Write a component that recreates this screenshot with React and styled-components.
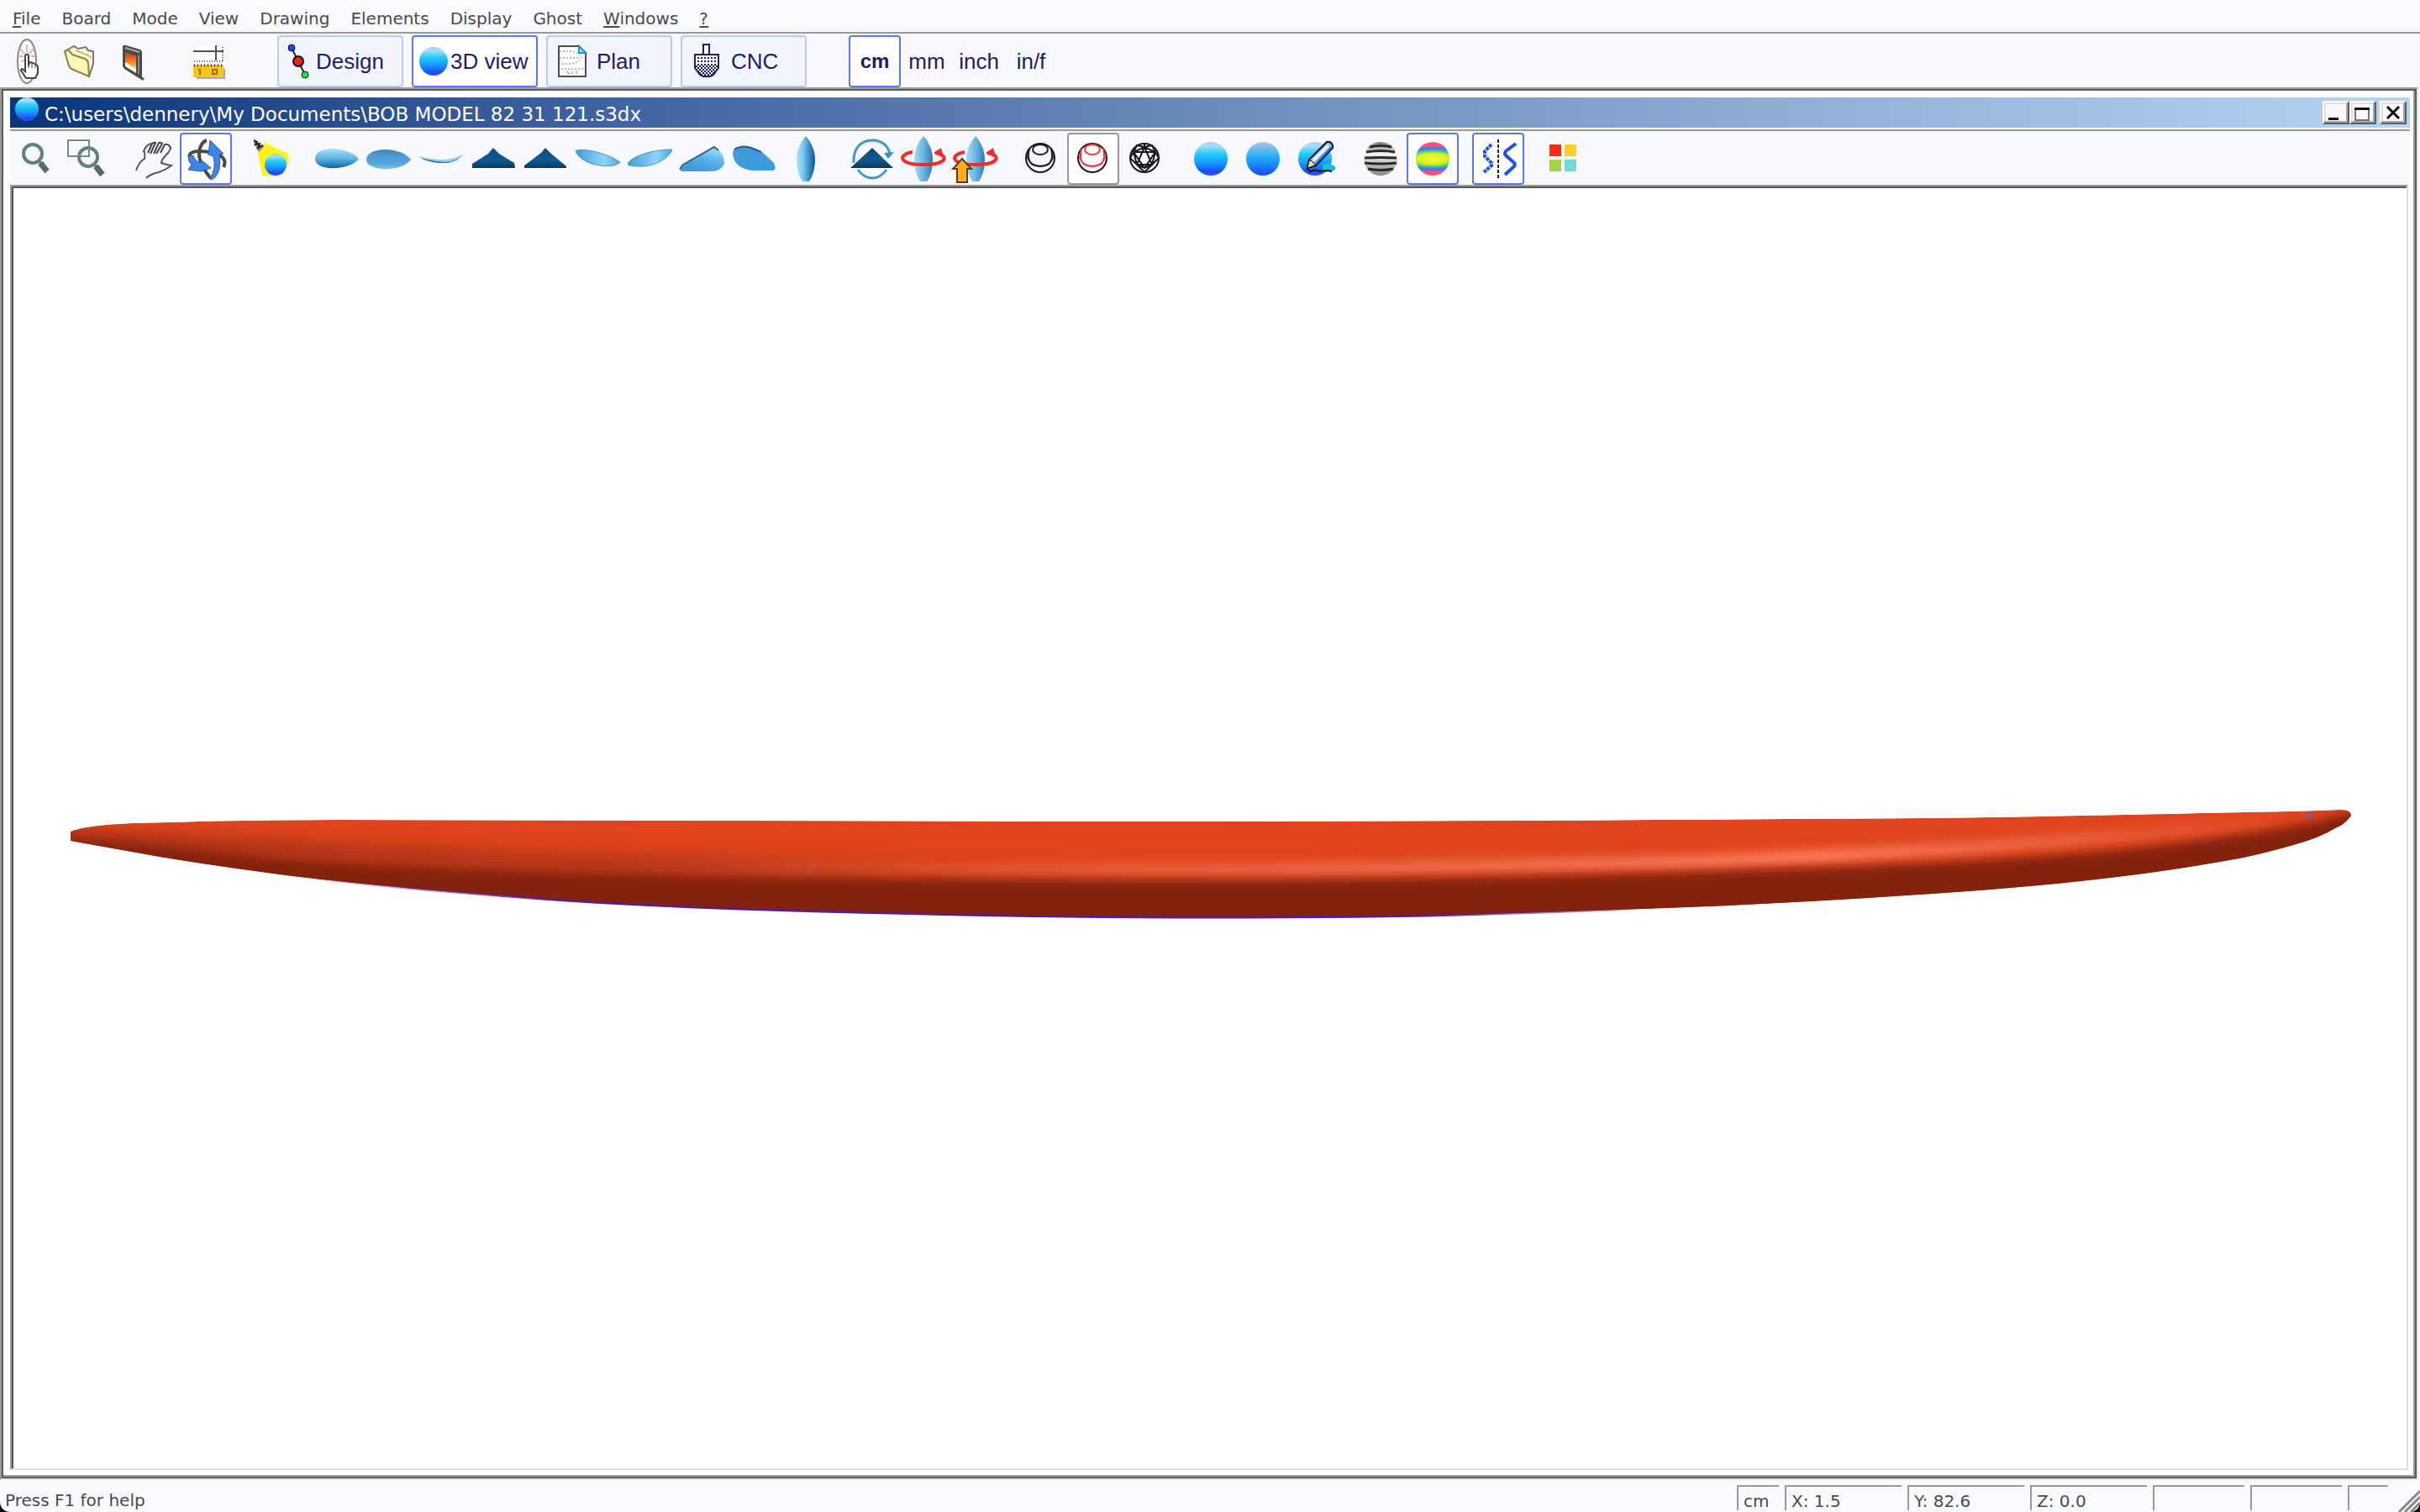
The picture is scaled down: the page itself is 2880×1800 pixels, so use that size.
import { useState } from 'react';
import styled, { createGlobalStyle } from 'styled-components';

const GlobalStyle = createGlobalStyle`
  *,
  *::before,
  *::after {
    box-sizing: border-box;
  }

  body {
    margin: 0;
    background-color: #000;
    color: #4a4a4a;
    font-family: 'DejaVu Sans', sans-serif;
    font-size: 20px;
  }

  button {
    margin: 0;
    font-family: inherit;
    color: inherit;
  }
`;

const Window = styled.div`
  display: flex;
  flex-direction: column;
  min-height: 100vh;
  background-color: #f9fbff;
  border-radius: 0 0 12px 12px;
  overflow: hidden;
`;

const MenuBar = styled.nav`
  display: flex;
  gap: 25px;
  height: 40px;
  padding: 6px 15px 0;
  border-bottom: 2px solid #999;
`;

const MenuItem = styled.button`
  padding: 0;
  border: none;
  background: none;
  font-size: 20px;

  u {
    text-decoration-thickness: 2px;
    text-underline-offset: 2px;
  }
`;

const Toolbar = styled.div`
  display: flex;
  align-items: flex-end;
  gap: ${(props) => props.$gap}px;
  height: 64px;
  padding-left: ${(props) => props.$indent || 0}px;
  background-color: #f7f9ff;
`;

const Group = styled.div`
  display: flex;
  gap: ${(props) => props.$gap || 0}px;
  margin-left: ${(props) => props.$space || 0}px;
`;

const ringColors = { blue: '#5b78f0', grey: '#999' };

const ToolButton = styled.button`
  display: grid;
  place-items: center;
  width: 62px;
  height: 62px;
  padding: 0;
  border: 2px solid ${(props) => ringColors[props.$ring] || 'transparent'};
  border-radius: 4px;
  background-color: ${(props) => (props.$ring ? '#fff' : 'transparent')};
`;

const ModeButton = styled.button`
  display: flex;
  align-items: center;
  gap: 2px;
  width: 150px;
  height: 62px;
  padding: 0 0 0 6px;
  border: 2px solid ${(props) => (props.$active ? '#5b78f0' : '#bccaf8')};
  border-radius: 4px;
  background-color: ${(props) => (props.$active ? '#fff' : '#f2f5fb')};
  color: #1c1c6c;
  font-family: 'Liberation Sans', sans-serif;
  font-size: 26px;
`;

const UnitButton = styled(ToolButton)`
  color: #1c1c6c;
  font-family: 'Liberation Sans', sans-serif;
  font-size: ${(props) => (props.$ring ? 24 : 26)}px;
  font-weight: ${(props) => (props.$ring ? 700 : 400)};
`;

const Frame = styled.main`
  display: flex;
  flex: 1;
  margin-right: 2px;
  border: 2px solid;
  border-color: #999 #e6e6e0 #e6e6e0 #999;
`;

const FrameInner = styled.div`
  display: flex;
  flex: 1;
  flex-direction: column;
  padding: 8px 6px 8px 8px;
  border: 2px solid #5c5c5c;
  background-color: #fff;
  box-shadow: inset -2px -2px #999;
`;

const TitleBar = styled.header`
  display: flex;
  align-items: center;
  height: 36px;
  padding: 0 4px 0 6px;
  background: linear-gradient(90deg, #0b3479, #3d62a0 24%, #6585b6 46%, #b5d5f3);
`;

const Title = styled.h1`
  flex: 1;
  margin: 0 0 0 5px;
  padding-top: 3px;
  color: #fff;
  font-size: 23px;
  font-weight: 400;
`;

const TitleIcon = styled.svg`
  align-self: flex-start;
`;

const WindowButton = styled.button`
  width: 32px;
  height: 28px;
  margin-left: ${(props) => props.$space || 0}px;
  padding: 0;
  border: 2px solid;
  border-color: #fff #5c5c5c #5c5c5c #fff;
  background-color: #f8faff;
  box-shadow: inset -2px -2px #a8a8a8, inset 2px 2px #e2e0da;

  svg {
    display: block;
  }
`;

const ViewTools = styled.div`
  margin-top: 2px;
  border-top: 2px solid #999;
`;

const Canvas = styled.section`
  display: flex;
  flex: 1;
  margin-right: 2px;
  border: 2px solid;
  border-color: #999 #dcdcdc #dcdcdc #999;
`;

const CanvasInner = styled.div`
  display: flex;
  flex: 1;
  border: solid #555;
  border-width: 2px 0 0 2px;
  background-color: #fff;
`;

const Drawing = styled.svg`
  display: block;
  flex: 1;
  width: 100%;
  min-width: 0;
`;

const StatusBar = styled.footer`
  display: flex;
  align-items: center;
  gap: 7px;
  height: 38px;
  padding-top: 4px;
`;

const Hint = styled.span`
  flex: 1;
  padding: 6px 0 0 6px;
`;

const Cell = styled.span`
  display: flex;
  align-items: center;
  width: ${(props) => props.$width}px;
  height: 30px;
  padding: 5px 0 0 6px;
  border: solid #999;
  border-width: 2px 0 0 2px;
`;

const Icon = ({ width = 58, children }) => (
  <svg width={width} height="58" viewBox={`0 0 ${width} 58`} fill="none" aria-hidden="true">
    {children}
  </svg>
);

const Ball = ({ cx = 29, cy = 29, r = 20, fill = 'ball' }) => (
  <circle cx={cx} cy={cy} r={r} fill={`url(#${fill})`} />
);

/* Gradients shared by all the icons */
const Shades = () => (
  <defs>
    <linearGradient id="ball" x1="0" y1="0" x2="0" y2="1">
      <stop offset="0" stopColor="#b6c3f2" />
      <stop offset="0.12" stopColor="#a4e0fa" />
      <stop offset="0.35" stopColor="#22cdfb" />
      <stop offset="0.62" stopColor="#189afe" />
      <stop offset="0.88" stopColor="#1450fa" />
      <stop offset="1" stopColor="#3a4df0" />
    </linearGradient>
    <linearGradient id="softBall" x1="0" y1="0" x2="0" y2="1">
      <stop offset="0" stopColor="#c9b9e6" />
      <stop offset="0.25" stopColor="#53c0f2" />
      <stop offset="0.55" stopColor="#16a3fb" />
      <stop offset="1" stopColor="#1e46f5" />
    </linearGradient>
    <linearGradient id="deck" x1="0" y1="0" x2="0" y2="1">
      <stop offset="0" stopColor="#a4e0fb" />
      <stop offset="0.5" stopColor="#62b6e6" />
      <stop offset="1" stopColor="#0d619e" />
    </linearGradient>
    <linearGradient id="bottom" x1="0" y1="0" x2="0" y2="1">
      <stop offset="0" stopColor="#3f82ae" />
      <stop offset="0.3" stopColor="#4a9ad4" />
      <stop offset="0.75" stopColor="#57a8de" />
      <stop offset="1" stopColor="#86c2e6" />
    </linearGradient>
    <linearGradient id="nose" x1="0" y1="0" x2="0" y2="1">
      <stop offset="0" stopColor="#0c4a7d" />
      <stop offset="0.6" stopColor="#105a90" />
      <stop offset="1" stopColor="#063862" />
    </linearGradient>
    <linearGradient id="leaf" x1="0" y1="0" x2="1" y2="0">
      <stop offset="0" stopColor="#3f9bdc" />
      <stop offset="0.65" stopColor="#8ed6fa" />
      <stop offset="1" stopColor="#4ba6df" />
    </linearGradient>
    <linearGradient id="wedge" x1="1" y1="0" x2="0.5" y2="1">
      <stop offset="0" stopColor="#a8eaff" />
      <stop offset="0.6" stopColor="#55aee8" />
      <stop offset="1" stopColor="#3f9bdc" />
    </linearGradient>
    <linearGradient id="upright" x1="0" y1="0" x2="1" y2="0">
      <stop offset="0" stopColor="#a8e6fd" />
      <stop offset="0.35" stopColor="#7cc8f0" />
      <stop offset="0.7" stopColor="#3a87c4" />
      <stop offset="1" stopColor="#0d568f" />
    </linearGradient>
    <linearGradient id="uprightPale" x1="0" y1="0" x2="1" y2="0">
      <stop offset="0" stopColor="#a2dcf7" />
      <stop offset="0.5" stopColor="#6cb6e4" />
      <stop offset="1" stopColor="#3079b4" />
    </linearGradient>
    <linearGradient id="zebra" x1="0" y1="0" x2="0" y2="1">
      <stop offset="0" stopColor="#777" />
      <stop offset="0.35" stopColor="#f4f4f4" />
      <stop offset="1" stopColor="#888" />
    </linearGradient>
    <radialGradient id="rainbow" gradientTransform="translate(-1 0) scale(3 1)">
      <stop offset="0" stopColor="#f6f84a" />
      <stop offset="0.3" stopColor="#d8f21c" />
      <stop offset="0.42" stopColor="#7be33c" />
      <stop offset="0.52" stopColor="#22a8e8" />
      <stop offset="0.64" stopColor="#5a6cf4" />
      <stop offset="0.78" stopColor="#f4507c" />
      <stop offset="1" stopColor="#ff5a5a" />
    </radialGradient>
    <linearGradient id="sunset" x1="0" y1="0" x2="0" y2="1">
      <stop offset="0" stopColor="#d9300c" />
      <stop offset="0.5" stopColor="#f68b1f" />
      <stop offset="1" stopColor="#fff0c0" />
    </linearGradient>
  </defs>
);

const NewIcon = () => (
  <Icon>
    <ellipse cx="28" cy="29" rx="11" ry="26" fill="#fff" stroke="#888" strokeWidth="2" />
    <path d="M28 9v9M20 14l5 6M36 14l-5 6M18 23h6M38 23h-5M21 30l4-3" stroke="#f7a8a8" strokeWidth="2" />
    <path
      d="M26 22q2-3 4 0v11l2-3 3 1 3 1 3 3v8l-3 6H27l-6-9q0-4 4 0l1 1z"
      fill="#fff"
      stroke="#444"
      strokeWidth="2"
    />
    <path d="M30 32v5M34 32v5M38 33v4" stroke="#444" strokeWidth="1" />
  </Icon>
);

const OpenIcon = () => (
  <Icon>
    <path d="M13 16l9-5 5 3 9-2 3 4 6 1v15l-5 15z" fill="#fbf6cf" stroke="#777" strokeWidth="2" />
    <path d="M11 17l4-2 5 6 15 5q4 2 4 6l1 15-21-9q-3-2-4-7z" fill="#fdf8b4" stroke="#8a8348" strokeWidth="2" />
    <path d="M24 16l15 6 4 3" stroke="#8a8348" strokeWidth="1" />
  </Icon>
);

const SaveIcon = () => (
  <Icon>
    <path d="M18 11q1-2 4-1l17 5q2 1 2 4v29l3 1-2 3-22-14q-2-2-2-4z" fill="#4b4b4b" />
    <path d="M21 18l13 5v19l-13-9z" fill="url(#sunset)" />
    <path d="M21 13l17 5" stroke="#aaa" strokeWidth="2" />
    <path d="M37 22v22" stroke="#858585" strokeWidth="2" />
    <path d="M21 30l13 8v5l-13-8z" fill="#fffbe8" />
  </Icon>
);

const MeasureIcon = () => (
  <Icon>
    <path d="M14 12h32v20H14z" fill="#fff" />
    <path d="M10 17h36M37 10v18" stroke="#555" strokeWidth="2" />
    <path d="M45 12v18M11 29h34" stroke="#666" strokeWidth="2" strokeDasharray="1 2" />
    <path d="M14 38h34v12H14z" fill="#aaa" />
    <path d="M10 33h36v15H10z" fill="#f5c421" />
    <path d="M11 34h34" stroke="#222" strokeWidth="3" strokeDasharray="1 3" />
    <path d="M18 38v7M16 39h2M33 39h5v5h-5z" stroke="#9c7410" strokeWidth="2" />
  </Icon>
);

const DesignIcon = () => (
  <Icon width={36}>
    <path d="M9 13l8 16 8 16" stroke="#222" strokeWidth="2" />
    <circle cx="9" cy="13" r="4" fill="#2344e8" stroke="#111" />
    <circle cx="17" cy="29" r="6" fill="#f21d1d" stroke="#111" strokeWidth="2" />
    <circle cx="25" cy="45" r="4" fill="#12e838" stroke="#111" />
  </Icon>
);

const ViewIcon = () => (
  <Icon width={36}>
    <Ball cx={18} r={17} />
  </Icon>
);

const PlanIcon = () => (
  <Icon width={50}>
    <path d="M7 11h24l8 8v28H7z" fill="#fff" stroke="#4c4c5c" strokeWidth="2" />
    <path d="M31 11v8h8z" fill="#c9f1f8" stroke="#129fc0" strokeWidth="2" />
    <path d="M8 17h14q10 2 12 8-2 5-12 7H8M8 25h24M10 38h26" stroke="#777" strokeDasharray="2 2" />
    <path d="M16 41l4 3M24 41l-3 3M28 40v4" stroke="#888" />
  </Icon>
);

const CncIcon = () => (
  <Icon width={50}>
    <defs>
      <pattern id="knurl" width="4" height="4" patternUnits="userSpaceOnUse">
        <path d="M0 0h2v2H0z" fill="#1c1c6c" />
      </pattern>
      <pattern id="knurlDense" width="4" height="4" patternUnits="userSpaceOnUse">
        <path d="M0 0h2v2H0zM2 2h2v2H2z" fill="#1c1c6c" />
      </pattern>
    </defs>
    <path d="M19 21V9h7v12" fill="#fff" stroke="#1c1c6c" strokeWidth="2" />
    <path d="M9 21h28v16l-6 8-4 2h-8l-4-2-6-8z" fill="#fff" />
    <path d="M9 21h28v13H9z" fill="url(#knurl)" />
    <path d="M9 34h28v3l-6 8-4 2h-8l-4-2-6-8z" fill="url(#knurlDense)" />
    <path d="M9 21h28v16l-6 8-4 2h-8l-4-2-6-8z" stroke="#1c1c6c" strokeWidth="2" />
  </Icon>
);

const Lens = ({ x, y }) => (
  <>
    <circle cx={x} cy={y} r="11" fill="#f7f9ff" stroke="#637f82" strokeWidth="4" />
    <path d={`M${x + 7} ${y + 8}l3 4`} stroke="#637f82" strokeWidth="3" />
    <path d={`M${x + 9} ${y + 11}l8 10`} stroke="#56696d" strokeWidth="7" />
  </>
);

const ZoomIcon = () => (
  <Icon>
    <Lens x={25} y={23} />
  </Icon>
);

const ZoomBoxIcon = () => (
  <Icon>
    <path d="M5 7h25v19H5z" stroke="#78898c" strokeWidth="2" />
    <Lens x={29} y={27} />
    <path d="M18 26h12V16" stroke="#78898c" strokeWidth="2" />
  </Icon>
);

const PanIcon = () => (
  <Icon>
    <path
      d="M8 43q3-10 10-14 1-8-1-9 3-8 9-9M20 52q5-5 15-7 10-4 15-8-7-1-12-3 0-4 8-12 3-4 3-6"
      stroke="#555"
      strokeWidth="2"
    />
    <path
      d="M22 22l5-11q2-2 4-1l-6 13M29 23l6-13q3-1 4 1l-7 12M37 22l5-10q3-1 5 1 2 2 2 4"
      stroke="#444"
      strokeWidth="2"
    />
  </Icon>
);

const OrbitIcon = () => (
  <Icon>
    <path d="M30 7q-7 2-9 14-1 13 12 29l4 3" stroke="#4a4a4a" strokeWidth="4" />
    <path d="M9 26q1-6 12-6 16 0 26 6 7 5 3 13" stroke="#4a4a4a" strokeWidth="4" />
    <path d="M34 7l16 16-5 1q3 20-6 28l-6 1q9-11 5-27l-6-2z" fill="#3b86e6" stroke="#2a5ea8" />
    <path d="M8 26q0 7 4 10l-4 6 15 2 12-4-12-10v4q-8-3-9-9z" fill="#3b86e6" stroke="#2a5ea8" />
  </Icon>
);

const LightIcon = () => (
  <Icon>
    <path d="M12 17L21 10 49 23v13L34 50l-16-1z" fill="#fdf21a" />
    <path d="M8 7l12 8-6 6-6-11z" fill="#888" />
    <path d="M8 7l4 2-2 3 5-1-2 5 6-3" stroke="#222" strokeWidth="2" />
    <Ball cx={34} cy={36} r={13} />
  </Icon>
);

const UprightBoard = ({ fill = 'upright' }) => (
  <path d="M29 2c7 8 11 18 11 28 0 11-3 20-7 26h-8c-4-6-7-15-7-26 0-10 4-20 11-28z" fill={`url(#${fill})`} />
);

const SpinRing = () => (
  <>
    <path d="M16 21C-2 24-1 36 29 36s30-12 14-14" stroke="#f62a2a" strokeWidth="4" />
    <path d="M41 22l9-6 3 12z" fill="#f62a2a" />
  </>
);

const boardShapes = {
  Deck: <path d="M3 29c0-17 39-15 52 0-10 14-52 16-52 0z" fill="url(#deck)" />,
  Bottom: <path d="M2 30c0-15 40-17 53 0-12 16-53 14-53 0z" fill="url(#bottom)" />,
  Rocker: (
    <>
      <path d="M2 26q27 7 43 2 6-2 11-5-5 7-12 9-20 6-42-6z" fill="#8fcdf2" />
      <path d="M3 27q28 10 44 3l5-3q-8 8-25 7-15-1-24-7z" fill="#2f6a94" />
    </>
  ),
  Nose: <path d="M4 35l19-12 6-7 7 7 18 11 1 6H4z" fill="url(#nose)" />,
  Tail: <path d="M4 37l20-15 5-6 7 7 18 15v2H4z" fill="url(#nose)" />,
  'Left perspective': (
    <path d="M3 20c6-5 37 2 53 13-7 9-46 5-53-13z" fill="url(#leaf)" stroke="#4f93bc" />
  ),
  'Right perspective': (
    <path d="M3 35c3-8 28-17 53-17-5 13-25 21-40 20-8 0-13-1-13-3z" fill="url(#leaf)" stroke="#4f93bc" />
  ),
  'Front quarter': (
    <>
      <path d="M3 42l3-5L45 15q12 9 11 19-3 10-17 10H5z" fill="url(#wedge)" />
      <path d="M3 41l4-5 37-21 5 4" stroke="#2c6288" strokeWidth="2" />
    </>
  ),
  'Rear quarter': (
    <>
      <path d="M4 23q0-9 15-9 10 1 20 7l14 13q4 9-2 9H28Q6 41 4 23z" fill="#3f9bdc" />
      <path d="M6 18q9-6 20-2l12 5" stroke="#2c5a7c" strokeWidth="2" />
    </>
  ),
  Upright: <UprightBoard />,
};

const TurnIcon = () => (
  <Icon>
    <path d="M8 34C7 16 17 7 30 7c12 0 19 7 21 16" stroke="#4295cf" strokeWidth="3" />
    <path d="M44 22l12-1-7 8z" fill="#3b8cc8" />
    <path d="M13 42q7 10 17 10t17-10" stroke="#4295cf" strokeWidth="3" />
    <path d="M4 40l26-24 25 24z" fill="url(#nose)" />
  </Icon>
);

const SpinIcon = () => (
  <Icon>
    <UprightBoard fill="uprightPale" />
    <SpinRing />
  </Icon>
);

const SpinUpIcon = () => (
  <Icon>
    <UprightBoard fill="uprightPale" />
    <SpinRing />
    <path d="M13 29l11 12h-5v16H7V41H2z" fill="#f9ac1e" stroke="#5a3f10" strokeWidth="2" />
  </Icon>
);

const WireIcon = ({ color = '#1a1a1a' }) => (
  <Icon>
    <circle cx="28" cy="28" r="17" stroke="#1a1a1a" strokeWidth="2" />
    <ellipse cx="28" cy="18" rx="9" ry="6" stroke={color} strokeWidth="2" />
    <path d="M15 17q-5 21 13 21t13-21" stroke={color} strokeWidth="2" />
    <path d="M12 23c-1 19 33 19 32 0" stroke={color} strokeWidth="1" />
  </Icon>
);

const MeshIcon = () => (
  <Icon>
    <circle cx="28" cy="28" r="17" stroke="#1a1a1a" strokeWidth="2" />
    <path
      d="M15 21l13-6 13 6-4 15-9 4-9-4zM15 21h26L28 40zM28 11v4l-9 21M28 15l9 21H19M11 28l4-7 4-8 9 2 9-2 4 8 4 7-8 8-9 9-9-9z"
      stroke="#1a1a1a"
      strokeWidth="2"
    />
  </Icon>
);

const PaintIcon = () => (
  <Icon>
    <Ball />
    <path d="M38 36q9-3 11 0 7 3 3 7l-14 2z" fill="#16c0dc" />
    <path d="M19 41l5 3q6-3 10 0l10-1 5 1" stroke="#111" strokeWidth="2" />
    <path d="M20 40l2-10L43 9q5-1 7 4v3L30 37z" fill="#7fc0f5" stroke="#111" strokeWidth="2" />
    <path d="M26 32L45 13" stroke="#fff" strokeWidth="3" />
    <path d="M29 36L49 15" stroke="#2468c8" strokeWidth="2" />
    <path d="M20 40l2-9 4 1 3 5z" fill="#fbd9a4" stroke="#111" />
  </Icon>
);

const ZebraIcon = () => (
  <Icon>
    <Ball fill="zebra" />
    <path
      d="M16 15q13-3 26 0M12 21q17-3 34 0M10 28q19-1 38 0M10 34q19 2 38 0M14 41q15 3 30 0"
      stroke="#2a2a2a"
      strokeWidth="3"
    />
  </Icon>
);

const CurvatureIcon = () => (
  <Icon>
    <Ball fill="rainbow" />
  </Icon>
);

const SmoothIcon = () => (
  <Icon>
    <path d="M21 12l-8 8v6l8 8v3l-9 8" stroke="#1d50f2" strokeWidth="4" strokeDasharray="4 1" />
    <path d="M29 6v46" stroke="#222" strokeWidth="2" strokeDasharray="4 2" />
    <path d="M50 11L38 20q-2 3 0 5l9 8q3 2 1 5L37 48" stroke="#1d50f2" strokeWidth="4" />
  </Icon>
);

const ColorsIcon = () => (
  <Icon>
    <path d="M12 12h14v14H12z" fill="#fb2b14" />
    <path d="M30 12h14v14H30z" fill="#ffd02a" />
    <path d="M12 30h14v14H12z" fill="#a5d344" />
    <path d="M30 30h14v14H30z" fill="#77d8d6" />
  </Icon>
);

const outline =
  'M68 766Q90 756 184 755Q280 752 384 752L1284 754Q1700 754 2284 750Q2480 747 2602 744L2709 742L2770 740Q2782 740 2782 747Q2775 757 2765 761Q2745 773 2720 780Q2690 789 2654 797Q2600 807 2543 815Q2490 822 2432 828Q2360 835 2284 840Q2100 853 1912 859Q1800 863 1684 866Q1560 868 1430 868Q1250 868 1086 864Q940 861 811 856Q670 850 564 841Q430 831 324 818Q240 807 174 796L68 777Z';

const bottomEdge =
  'M324 818Q430 831 564 841Q670 850 811 856Q940 861 1086 864Q1250 868 1430 868Q1560 868 1684 866Q1800 863 1912 859';

const shadowShape =
  'M40 772Q160 780 284 794Q400 804 564 810Q850 821 1284 823Q1560 824 1804 819Q2080 813 2284 803Q2420 796 2520 786Q2660 770 2740 754L2800 738V900H40Z';

const highlight = 'M700 808Q1200 813 1544 811Q1800 807 2000 802Q2200 794 2324 786Q2520 771 2700 755';

function Surfboard() {
  return (
    <Drawing viewBox="0 0 2848 1524" role="img" aria-label="Surfboard, 3D view">
      <Shades />
      <defs>
        <clipPath id="board">
          <path d={outline} />
        </clipPath>
        <filter id="soft" x="-5%" y="-50%" width="110%" height="200%">
          <feGaussianBlur stdDeviation="6" />
        </filter>
        <filter id="softer" x="-5%" y="-50%" width="110%" height="200%">
          <feGaussianBlur stdDeviation="9" />
        </filter>
        <linearGradient id="shine" gradientUnits="userSpaceOnUse" x1="700" y1="0" x2="2760" y2="0">
          <stop offset="0" stopColor="#f07454" stopOpacity="0" />
          <stop offset="0.4" stopColor="#f07454" stopOpacity="0.7" />
          <stop offset="0.7" stopColor="#fa7c5c" />
          <stop offset="1" stopColor="#f07454" stopOpacity="0" />
        </linearGradient>
        <linearGradient id="dusk" gradientUnits="userSpaceOnUse" x1="68" y1="0" x2="1300" y2="0">
          <stop offset="0" stopColor="#8e2a10" stopOpacity="0.7" />
          <stop offset="0.6" stopColor="#8e2a10" stopOpacity="0.6" />
          <stop offset="1" stopColor="#8e2a10" stopOpacity="0" />
        </linearGradient>
        <linearGradient id="edge" gradientUnits="userSpaceOnUse" x1="324" y1="0" x2="2000" y2="0">
          <stop offset="0" stopColor="#5c1c80" stopOpacity="0" />
          <stop offset="0.2" stopColor="#5c1c80" />
          <stop offset="0.8" stopColor="#5c1c80" />
          <stop offset="1" stopColor="#5c1c80" stopOpacity="0" />
        </linearGradient>
      </defs>
      <g clipPath="url(#board)">
        <path d={outline} fill="#df441e" />
        <path
          d="M50 772Q284 786 564 799Q850 810 1300 814"
          fill="none"
          stroke="url(#dusk)"
          strokeWidth="20"
          filter="url(#softer)"
        />
        <path d={highlight} fill="none" stroke="url(#shine)" strokeWidth="16" filter="url(#soft)" />
        <path d={shadowShape} fill="#83200c" filter="url(#soft)" />
      </g>
      <path d={bottomEdge} fill="none" stroke="url(#edge)" strokeWidth="3" />
      <path d="M2731 742l2 4v3h-4v-3z" fill="#4a6cd8" />
    </Drawing>
  );
}

const menus = ['File', 'Board', 'Mode', 'View', 'Drawing', 'Elements', 'Display', 'Ghost', 'Windows', '?'];
const underlined = ['File', 'Windows', '?'];

const fileTools = [
  { label: 'New board', icon: <NewIcon /> },
  { label: 'Open', icon: <OpenIcon /> },
  { label: 'Save', icon: <SaveIcon /> },
];

const modes = [
  { label: 'Design', icon: <DesignIcon /> },
  { label: '3D view', icon: <ViewIcon /> },
  { label: 'Plan', icon: <PlanIcon /> },
  { label: 'CNC', icon: <CncIcon /> },
];

const units = ['cm', 'mm', 'inch', 'in/f'];

const viewTools = [
  [
    { label: 'Zoom', icon: <ZoomIcon /> },
    { label: 'Zoom window', icon: <ZoomBoxIcon /> },
  ],
  [
    { label: 'Pan', icon: <PanIcon /> },
    { label: 'Rotate', icon: <OrbitIcon />, ring: 'blue' },
  ],
  [{ label: 'Light', icon: <LightIcon /> }],
  Object.entries(boardShapes).map(([label, shape]) => ({ label, icon: <Icon>{shape}</Icon> })),
  [
    { label: 'Turn over', icon: <TurnIcon /> },
    { label: 'Spin', icon: <SpinIcon /> },
    { label: 'Spin upright', icon: <SpinUpIcon /> },
  ],
  [
    { label: 'Slices', icon: <WireIcon /> },
    { label: 'Colored slices', icon: <WireIcon color="#f23434" />, ring: 'grey' },
    { label: 'Mesh', icon: <MeshIcon /> },
  ],
  [
    { label: 'Shaded', icon: <Icon><Ball /></Icon> },
    { label: 'Soft shaded', icon: <Icon><Ball fill="softBall" /></Icon> },
    { label: 'Paint', icon: <PaintIcon /> },
  ],
  [
    { label: 'Zebra', icon: <ZebraIcon /> },
    { label: 'Curvature', icon: <CurvatureIcon />, ring: 'blue' },
  ],
  [{ label: 'Smooth', icon: <SmoothIcon />, ring: 'blue' }],
  [{ label: 'Colors', icon: <ColorsIcon /> }],
];

const cells = [
  { width: 50, text: 'cm' },
  { width: 139, text: 'X: 1.5' },
  { width: 139, text: 'Y: 82.6' },
  { width: 139, text: 'Z: 0.0' },
  { width: 109, text: '' },
  { width: 109, text: '' },
  { width: 48, text: '' },
];

function App() {
  const [mode, setMode] = useState('3D view');
  const [unit, setUnit] = useState('cm');

  return (
    <>
      <GlobalStyle />
      <Window>
        <MenuBar>
          {menus.map((name) => (
            <MenuItem key={name}>
              {underlined.includes(name) ? (
                <>
                  <u>{name[0]}</u>
                  {name.slice(1)}
                </>
              ) : (
                name
              )}
            </MenuItem>
          ))}
        </MenuBar>

        <Toolbar $gap={0} $indent={2}>
          <Group>
            {fileTools.map(({ label, icon }) => (
              <ToolButton key={label} aria-label={label}>
                {icon}
              </ToolButton>
            ))}
          </Group>
          <Group $space={30}>
            <ToolButton aria-label="Measure">
              <MeasureIcon />
            </ToolButton>
          </Group>
          <Group $space={50} $gap={10}>
            {modes.map(({ label, icon }) => (
              <ModeButton key={label} $active={mode === label} onClick={() => setMode(label)}>
                {icon}
                {label}
              </ModeButton>
            ))}
          </Group>
          <Group $space={50}>
            {units.map((name) => (
              <UnitButton key={name} $ring={unit === name && 'blue'} onClick={() => setUnit(name)}>
                {name}
              </UnitButton>
            ))}
          </Group>
        </Toolbar>

        <Frame>
          <FrameInner>
            <TitleBar>
              <TitleIcon width="30" height="30" viewBox="0 0 30 30" aria-hidden="true">
                <Ball cx={14} cy={14} r={14} />
              </TitleIcon>
              <Title>{'C:\\users\\dennery\\My Documents\\BOB MODEL 82 31 121.s3dx'}</Title>
              <WindowButton aria-label="Minimize">
                <svg width="28" height="24" viewBox="0 0 28 24">
                  <path d="M5 18h12v3H5z" fill="#111" />
                </svg>
              </WindowButton>
              <WindowButton aria-label="Maximize">
                <svg width="28" height="24" viewBox="0 0 28 24">
                  <path d="M5 7h16v14H5z" fill="none" stroke="#777" strokeWidth="2" />
                  <path d="M4 6h18v3H4z" fill="#111" />
                </svg>
              </WindowButton>
              <WindowButton aria-label="Close" $space={4}>
                <svg width="28" height="24" viewBox="0 0 28 24">
                  <path d="M7 5l14 14M21 5L7 19" stroke="#111" strokeWidth="3" />
                </svg>
              </WindowButton>
            </TitleBar>

            <ViewTools>
              <Toolbar $gap={16}>
                {viewTools.map((group) => (
                  <Group key={group[0].label}>
                    {group.map(({ label, icon, ring }) => (
                      <ToolButton key={label} aria-label={label} $ring={ring}>
                        {icon}
                      </ToolButton>
                    ))}
                  </Group>
                ))}
              </Toolbar>
            </ViewTools>

            <Canvas>
              <CanvasInner>
                <Surfboard />
              </CanvasInner>
            </Canvas>
          </FrameInner>
        </Frame>

        <StatusBar>
          <Hint>Press F1 for help</Hint>
          {cells.map(({ width, text }, index) => (
            <Cell key={index} $width={width}>
              {text}
            </Cell>
          ))}
          <svg width="31" height="34" viewBox="0 0 31 34" aria-hidden="true">
            <path d="M6 34l25-25M13 34l18-18M20 34l11-11" stroke="#888" strokeWidth="3" />
          </svg>
        </StatusBar>
      </Window>
    </>
  );
}

export default App;
